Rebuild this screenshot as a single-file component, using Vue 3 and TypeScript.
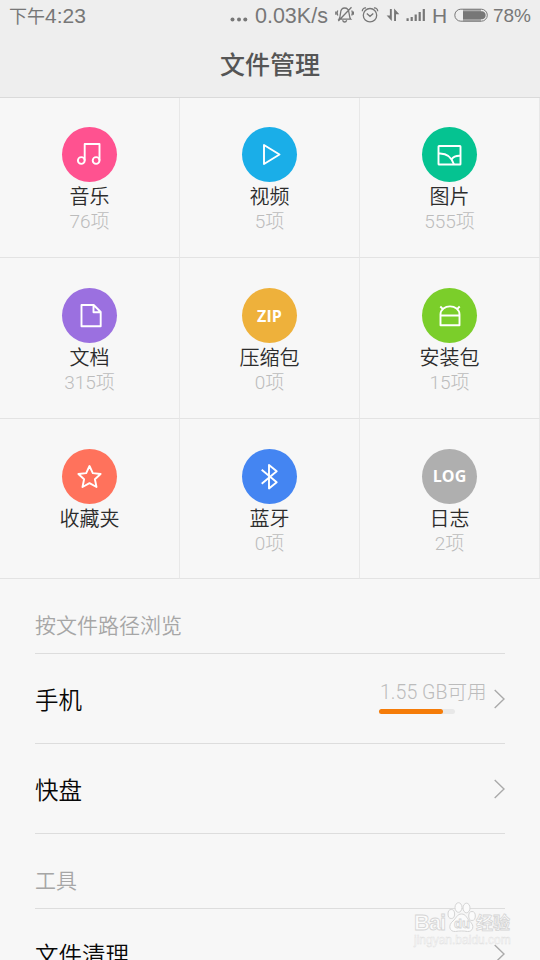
<script setup lang="ts">
interface Category {
  id: string
  label: string
  count: string
  color: string
  text?: string
}

interface Entry {
  title: string
  usage?: { text: string; percent: number }
}

interface Section {
  heading: string
  entries: Entry[]
}

const categories: Category[] = [
  { id: 'music', label: '音乐', count: '76项', color: '#ff5290' },
  { id: 'video', label: '视频', count: '5项', color: '#1aaee8' },
  { id: 'picture', label: '图片', count: '555项', color: '#05c391' },
  { id: 'document', label: '文档', count: '315项', color: '#9b70e0' },
  { id: 'zip', label: '压缩包', count: '0项', color: '#eeb13b', text: 'ZIP' },
  { id: 'apk', label: '安装包', count: '15项', color: '#7bce2a' },
  { id: 'favorite', label: '收藏夹', count: '', color: '#ff725c' },
  { id: 'bluetooth', label: '蓝牙', count: '0项', color: '#4485f2' },
  { id: 'log', label: '日志', count: '2项', color: '#afafaf', text: 'LOG' },
]

const sections: Section[] = [
  {
    heading: '按文件路径浏览',
    entries: [
      { title: '手机', usage: { text: '1.55 GB可用', percent: 84 } },
      { title: '快盘' },
    ],
  },
  { heading: '工具', entries: [{ title: '文件清理' }] },
]
</script>

<template>
  <div class="screen">
    <header class="header">
      <div class="status">
        <span class="time"><span class="ampm">下午</span>4:23</span>
        <div class="indicators">
          <svg class="dots" width="18" height="24" viewBox="0 0 18 24"><circle cx="2.5" cy="19.5" r="2" /><circle cx="9" cy="19.5" r="2" /><circle cx="15.3" cy="19.5" r="2" /></svg>
          <span class="speed">0.03K/s</span>
          <svg class="bell line" width="19" height="24" viewBox="0 0 19 24">
            <path d="M4 19.200C6 17 4.800 11 6.700 9.200c1.600-1.600 4.400-1.600 6 0 2.100 1.800 1 8 3 10zM7.600 20.200c.8 2.400 3.300 2.400 4.100 0M16.500 7.200 3.300 21M2.800 10.500c-.7 1.200-.7 3.500 0 5M.8 11.500v3.300M16.700 10.500c.7 1.200.7 3.500 0 5M18.400 11.500v3.300" />
          </svg>
          <svg class="alarm line" width="18" height="24" viewBox="0 0 18 24">
            <circle cx="9" cy="15.200" r="6.700" /><path d="M5.800 13.500 9 16.300l3.300-2.800M1.300 11.200C1.300 9 3 7.600 5 8M16.700 11.200C16.700 9 15 7.600 13 8" />
          </svg>
          <svg class="arrows" width="14" height="24" viewBox="0 0 14 24"><path d="M3.900 9h1.900v12L.6 15.600h3.300zM8.100 21h1.900v-6.800h3.300L8.100 8.500z" /></svg>
          <svg class="signal" width="20" height="24" viewBox="0 0 20 24"><path d="M.5 18.200h2.200V21H.5zM4.600 17h2.200v4H4.600zM8.600 14.500h2.200V21H8.600zM12.600 12h2.200v9h-2.200zM16.700 9h2.200v12h-2.200z" /></svg>
          <span class="network">H</span>
          <svg class="battery" width="35" height="24" viewBox="0 0 35 24">
            <rect x=".8" y="9.200" width="32.500" height="12" rx="6" fill="none" stroke="#777" stroke-width="1" />
            <path d="M9 9h18v12.500H9z" opacity=".55" /><path d="M9 11.200h18c3.600 0 4.600 2 4.600 4s-1 4-4.600 4H9z" />
          </svg>
          <span class="percent">78%</span>
        </div>
      </div>
      <h1 class="title">文件管理</h1>
    </header>

    <div class="grid">
      <div v-for="c in categories" :key="c.id" class="cell">
        <div class="badge" :style="{ backgroundColor: c.color }">
          <span v-if="c.text" class="badge-text">{{ c.text }}</span>
          <svg v-else class="glyph" width="55" height="55" viewBox="0 0 55 55">
            <template v-if="c.id === 'music'">
              <path d="M22.700 33.500V17H37.500v16.500" /><circle cx="19.300" cy="33.500" r="3.400" /><circle cx="34.100" cy="33.500" r="3.400" />
            </template>
            <path v-else-if="c.id === 'video'" d="M22 18v19L37.500 27.500z" />
            <template v-else-if="c.id === 'picture'">
              <rect x="16.500" y="19" width="22" height="18.500" rx=".6" /><path d="M16.500 26.500c7-.5 13 3 15.500 11M29.500 32.500c2-3 5-4 9-3.700" />
            </template>
            <path v-else-if="c.id === 'document'" d="M19.500 17h12.200l7 7v14.200H19.500zM31.500 17v7.300h7.200" />
            <path v-else-if="c.id === 'apk'" d="M18.500 37.200V26.500c0-10.800 19-10.800 19 0v10.700zM18.500 27.500h19M18.300 18.500l3.200 3.200M37.700 18.500l-3.200 3.200" />
            <path v-else-if="c.id === 'favorite'" d="m27.500 17 3.300 7.100 7.800.9-5.700 5.200 1.600 7.800-7-3.800-7 3.800 1.600-7.800-5.700-5.200 7.800-.9z" />
            <path v-else d="m19.700 20.700 15 12.500-7.700 6.300V16l7.700 6.300-15 12.500" />
          </svg>
        </div>
        <div class="label">{{ c.label }}</div>
        <div class="count">{{ c.count }}</div>
      </div>
    </div>

    <section v-for="s in sections" :key="s.heading" class="section">
      <h2 class="heading">{{ s.heading }}</h2>
      <div v-for="e in s.entries" :key="e.title" class="entry">
        <span class="entry-title">{{ e.title }}</span>
        <div v-if="e.usage" class="usage">
          <span class="usage-text">{{ e.usage.text }}</span>
          <div class="track"><div class="fill" :style="{ width: e.usage.percent + '%' }"></div></div>
        </div>
        <svg class="chevron" width="12" height="20" viewBox="0 0 12 20"><path d="m1.700 1 9.300 9-9.300 9" /></svg>
      </div>
    </section>

    <div class="watermark">
      <div class="brand">
        <span class="brand-latin">Bai</span>
        <span class="paw">
          <svg width="29" height="31" viewBox="0 0 29 31">
            <ellipse cx="4.300" cy="12" rx="3.300" ry="4.500" /><ellipse cx="11.500" cy="5.500" rx="3.500" ry="4.800" />
            <ellipse cx="19.500" cy="6" rx="3.500" ry="4.800" /><ellipse cx="25" cy="14" rx="3.300" ry="4.500" />
            <path d="M14.500 12c4.500 0 5 4 8 7 6 5 3 11-2 10.500-4-.7-8-.7-12 0-6 .5-8-6-2.500-10.500 3.500-3 4-7 8.500-7z" />
          </svg>
          <span class="du">du</span>
        </span>
        <span class="brand-cjk">经验</span>
      </div>
      <div class="domain">jingyan.baidu.com</div>
    </div>
  </div>
</template>

<style>
body {
  margin: 0;
  background: #f7f7f7;
}
</style>

<style scoped>
.screen {
  position: relative;
  width: 540px;
  height: 960px;
  overflow: hidden;
  background: #f7f7f7;
  font-family: "Liberation Sans", "Noto Sans CJK SC", sans-serif;
}

.header {
  box-sizing: border-box;
  height: 98px;
  background: #eee;
  border-bottom: 1px solid #dadada;
}

.status {
  display: flex;
  justify-content: space-between;
  height: 32px;
  padding: 0 9px 0 9px;
  color: #777;
  fill: #777;
  line-height: 32px;
  white-space: nowrap;
}

.time {
  font-size: 21px;
}

.ampm {
  font-size: 18px;
}

.indicators {
  display: flex;
  align-items: flex-start;
}

.line {
  fill: none;
  stroke: #777;
  stroke-width: 1.3;
}

.speed {
  width: 73px;
  margin-left: 7px;
  font-size: 21.5px;
}

.bell {
  margin-left: 7px;
}

.alarm {
  margin-left: 7px;
}

.arrows {
  margin-left: 7px;
}

.signal {
  margin-left: 6px;
}

.network {
  width: 16px;
  margin-left: 6px;
  font-size: 21px;
}

.battery {
  margin-left: 6px;
}

.percent {
  margin-left: 4px;
  font-size: 19px;
}

.title {
  margin: 0;
  color: #555;
  font-size: 25px;
  font-weight: 500;
  line-height: 67px;
  text-align: center;
}

.grid {
  display: grid;
  grid-template-columns: repeat(3, 180px);
  grid-template-rows: 160px 161px 160px;
}

.cell {
  display: flex;
  flex-direction: column;
  align-items: center;
  box-sizing: border-box;
  padding-top: 29.5px;
  border-right: 1px solid #e8e8e8;
  border-bottom: 1px solid #e3e3e3;
}

.cell:nth-child(-n + 3) {
  padding-top: 29px;
}

.cell:nth-child(n + 4):nth-child(-n + 6) {
  padding-top: 30px;
}

.badge {
  display: flex;
  align-items: center;
  justify-content: center;
  width: 55px;
  height: 55px;
  border-radius: 50%;
}

.badge-text {
  color: #fff;
  font-family: "Open Sans", sans-serif;
  font-size: 16px;
  font-weight: 700;
  letter-spacing: 0.1px;
}

.glyph {
  fill: none;
  stroke: #fff;
  stroke-width: 1.9;
  stroke-linejoin: round;
}

.label {
  color: #2c2c2c;
  font-size: 20px;
  font-weight: 350;
  line-height: 30px;
}

.count {
  margin-top: -2px;
  color: #bcbcbc;
  font-family: Roboto, "Noto Sans CJK SC", sans-serif;
  font-size: 19px;
  font-weight: 300;
  line-height: 24px;
}

.section {
  padding: 0 35px;
}

.heading {
  margin: 0;
  height: 74px;
  border-bottom: 1px solid #ddd;
  color: #a6a6a6;
  font-size: 21px;
  font-weight: 350;
  line-height: 94px;
}

.entry {
  display: flex;
  align-items: center;
  height: 89px;
  border-bottom: 1px solid #ddd;
}

.entry-title {
  flex: 1;
  color: #080808;
  font-size: 23.5px;
  font-weight: 350;
}

.usage {
  width: 108px;
  margin: 0 6px 4px 0;
}

.usage-text {
  display: block;
  padding-left: 1px;
  color: #bcbcbc;
  font-family: Roboto, "Noto Sans CJK SC", sans-serif;
  font-size: 19.6px;
  font-weight: 300;
  line-height: 26px;
  white-space: nowrap;
}

.track {
  width: 76px;
  height: 5px;
  margin-top: 3px;
  border-radius: 3px;
  background: #e8e8e8;
}

.fill {
  height: 5px;
  border-radius: 3px;
  background: #f57c09;
}

.chevron {
  fill: none;
  stroke: #aaa;
  stroke-width: 1.4;
}

.watermark {
  position: absolute;
  top: 901px;
  left: 414px;
  width: 98px;
  color: #fbfbfb;
  -webkit-text-stroke: 0.8px #d5d5d5;
}

.brand {
  display: flex;
  align-items: flex-end;
  height: 32px;
}

.brand-latin {
  width: 33px;
  font-size: 22px;
  font-weight: 700;
  line-height: 20px;
  letter-spacing: -1px;
}

.paw {
  position: relative;
  height: 31px;
}

.paw svg {
  fill: #fbfbfb;
  stroke: #d5d5d5;
  stroke-width: 1;
}

.du {
  position: absolute;
  top: 14px;
  left: 7px;
  font-size: 13px;
  font-weight: 700;
  line-height: 16px;
}

.brand-cjk {
  font-size: 17px;
  font-weight: 700;
  line-height: 18px;
}

.domain {
  font-size: 12px;
  line-height: 15px;
  -webkit-text-stroke: 0.4px #ddd;
}
</style>
